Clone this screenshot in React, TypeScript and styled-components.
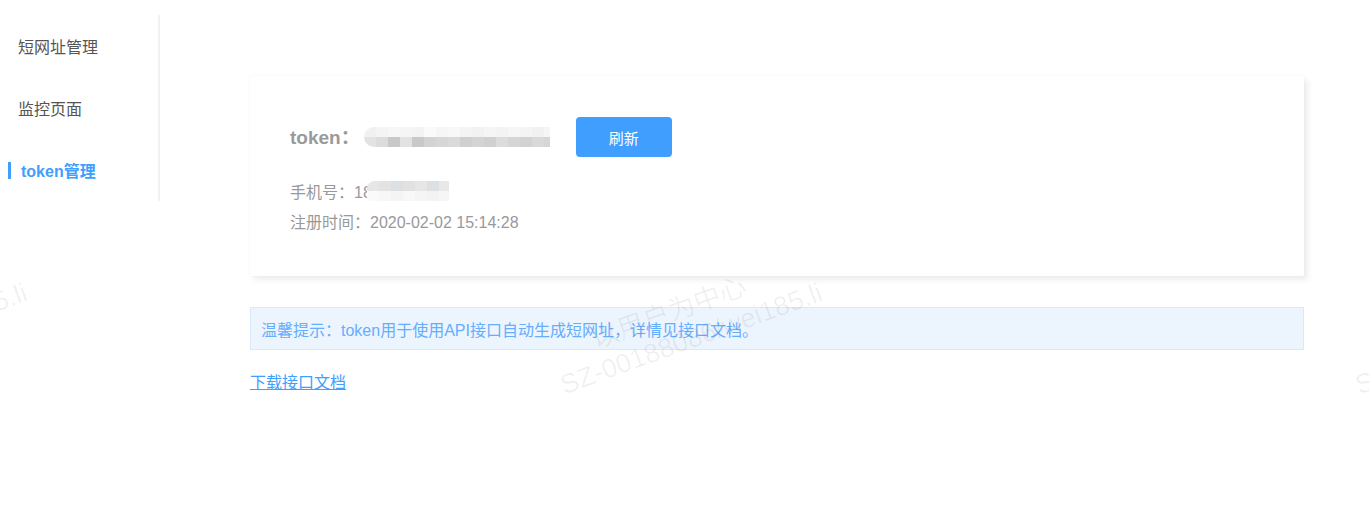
import React from "react";
import styled, { createGlobalStyle } from "styled-components";

const GlobalStyle = createGlobalStyle`
  html, body {
    margin: 0;
    padding: 0;
    background: #fff;
    font-family: "Liberation Sans", "Noto Sans CJK SC", sans-serif;
  }
`;

const menuData = [
  { title: "短网址管理", active: false },
  { title: "监控页面", active: false },
  { title: "token管理", active: true },
];

// 모자이크 처리된 토큰 (위/아래 두 줄의 회색 블록)
const tokenTop = ["#f1f1f1", "#f4f4f4", "#f7f7f7", "#f5f5f5", "#f3f3f3", "#fafafa", "#f6f6f6", "#f8f8f8", "#f4f4f4", "#f2f2f2", "#f5f5f5", "#f3f3f3", "#f6f6f6", "#f4f4f4", "#f1f1f1", "#f5f5f5"];
const tokenBottom = ["#e3e3e3", "#dcdcdc", "#c8c8c8", "#e2e2e2", "#c9c9c9", "#d3d3d3", "#d6d6d6", "#d8dadc", "#cfcfcf", "#d4d4d4", "#d0d0d0", "#dadcde", "#d5d5d5", "#d1d2d4", "#d9d9d9", "#d6d6d6"];
const phoneTop = ["#e6e6e6", "#e3e3e3", "#dde0e2", "#e1e1e1", "#e6e6e6", "#dce0e3", "#e8e8e8"];
const phoneBottom = ["#fafafa", "#f7f7f7", "#f4f4f4", "#f8f8f8", "#f5f5f5", "#f3f3f3", "#f6f6f6"];

const watermarkXs = [-228, 567, 1362];

const App = () => {
  return (
    <Page>
      <GlobalStyle />
      <Sidebar>
        {menuData.map((item, index) => (
          <MenuItem key={index} active={item.active}>
            {item.title}
          </MenuItem>
        ))}
      </Sidebar>
      <Main>
        <Card>
          <TokenRow>
            <TokenLabel>token：</TokenLabel>
            <Mosaic width={186} cell={12} round>
              <MosaicRow>
                {tokenTop.map((c, i) => (
                  <Cell key={i} style={{ background: c }} />
                ))}
              </MosaicRow>
              <MosaicRow>
                {tokenBottom.map((c, i) => (
                  <Cell key={i} style={{ background: c }} />
                ))}
              </MosaicRow>
            </Mosaic>
            <RefreshButton>刷新</RefreshButton>
          </TokenRow>
          <InfoLine>
            手机号：18
            <Mosaic width={82} cell={12} overlap>
              <MosaicRow>
                {phoneTop.map((c, i) => (
                  <Cell key={i} style={{ background: c }} />
                ))}
              </MosaicRow>
              <MosaicRow>
                {phoneBottom.map((c, i) => (
                  <Cell key={i} style={{ background: c }} />
                ))}
              </MosaicRow>
            </Mosaic>
          </InfoLine>
          <InfoLine>注册时间：2020-02-02 15:14:28</InfoLine>
        </Card>
        <Alert>温馨提示：token用于使用API接口自动生成短网址，详情见接口文档。</Alert>
        <DownloadLink href="#">下载接口文档</DownloadLink>
      </Main>
      {watermarkXs.map((x) => (
        <Watermark key={x} style={{ left: x }}>
          <WatermarkTop>以用户为中心</WatermarkTop>
          <span>SZ-00188086/wei185.li</span>
        </Watermark>
      ))}
    </Page>
  );
};

const Page = styled.div`
  position: relative;
  display: flex;
  align-items: flex-start;
  width: 1369px;
  height: 524px;
  overflow: hidden;
`;

const Sidebar = styled.nav`
  width: 158px;
  margin-top: 15px;
  border-right: 2px solid #f2f2f2;
  display: flex;
  flex-direction: column;
`;

interface MenuItemProps {
  active: boolean;
}
const MenuItem = styled.div<MenuItemProps>`
  position: relative;
  height: 62px;
  display: flex;
  align-items: center;
  padding-left: ${({ active }) => (active ? "21px" : "18px")};
  font-size: 16px;
  font-weight: ${({ active }) => (active ? "bold" : "normal")};
  color: ${({ active }) => (active ? "#409eff" : "#555")};

  &::before {
    content: "";
    display: ${({ active }) => (active ? "block" : "none")};
    position: absolute;
    left: 8px;
    top: 23px;
    width: 3px;
    height: 17px;
    background: #409eff;
  }
`;

const Main = styled.main`
  flex: 1;
  padding: 76px 65px 0 90px;
  display: flex;
  flex-direction: column;
  align-items: flex-start;
`;

const Card = styled.section`
  box-sizing: border-box;
  width: 1054px;
  height: 200px;
  padding: 41px 40px 0;
  background: #fff;
  box-shadow: 4px 4px 6px rgba(0, 0, 0, 0.07), 0 0 3px rgba(0, 0, 0, 0.04);
`;

const TokenRow = styled.div`
  display: flex;
  align-items: center;
  height: 40px;
  margin-bottom: 19px;
`;

const TokenLabel = styled.span`
  font-size: 19px;
  font-weight: bold;
  color: #9a9a9a;
  margin: 0 4px 3px 0;
`;

interface MosaicProps {
  width: number;
  cell: number;
  round?: boolean;
  overlap?: boolean;
}
const Mosaic = styled.span<MosaicProps>`
  display: inline-flex;
  flex-direction: column;
  width: ${({ width }) => width}px;
  height: 20px;
  margin-left: ${({ overlap }) => (overlap ? "-5px" : "0")};
  overflow: hidden;
  vertical-align: middle;
  border-radius: ${({ round }) => (round ? "10px 0 0 10px" : "8px 0 0 4px")};
  filter: blur(0.6px);

  & > div > span {
    width: ${({ cell }) => cell}px;
  }
`;

const MosaicRow = styled.div`
  display: flex;
  height: 10px;
`;

const Cell = styled.span`
  flex: none;
  height: 10px;
`;

const RefreshButton = styled.button`
  margin-left: 26px;
  width: 96px;
  height: 40px;
  border: none;
  border-radius: 4px;
  background: #409eff;
  color: #fff;
  font-family: inherit;
  font-size: 15px;
  cursor: pointer;
`;

const InfoLine = styled.div`
  display: flex;
  align-items: center;
  height: 30px;
  font-size: 16px;
  color: #999;
`;

const Alert = styled.div`
  box-sizing: border-box;
  width: 1054px;
  height: 43px;
  margin-top: 31px;
  padding: 0 10px;
  display: flex;
  align-items: center;
  background: #ecf4fe;
  border: 1px solid #d9e9fb;
  color: #66adff;
  font-size: 16px;
`;

const DownloadLink = styled.a`
  margin-top: 19px;
  font-size: 16px;
  color: #409eff;
  text-decoration: underline;
`;

// 화면 위에 겹쳐 보이는 워터마크
const Watermark = styled.div`
  position: absolute;
  top: 337px;
  width: 300px;
  display: flex;
  flex-direction: column;
  align-items: flex-start;
  transform: rotate(-20deg);
  transform-origin: left bottom;
  pointer-events: none;
  color: rgba(0, 0, 0, 0.06);
  font-size: 27px;
  line-height: 32px;
  white-space: nowrap;
`;

const WatermarkTop = styled.span`
  padding-left: 45px;
`;

export default App;
